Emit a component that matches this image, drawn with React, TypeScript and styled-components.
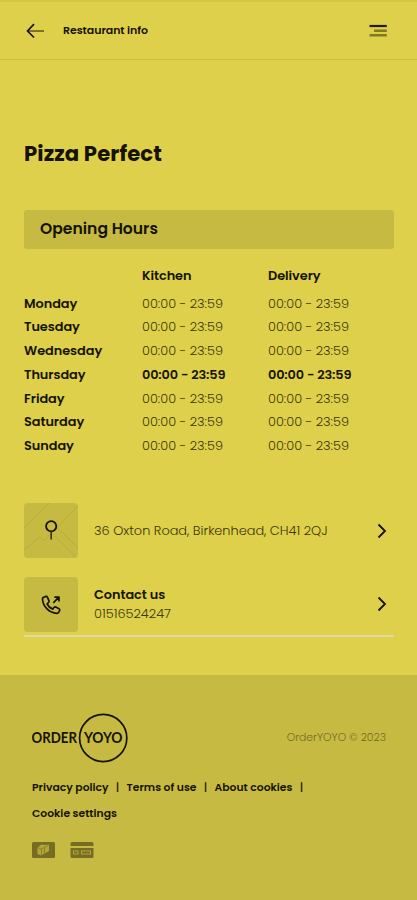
import React from "react";
import styled, { createGlobalStyle } from "styled-components";

const GlobalStyle = createGlobalStyle`
  * { box-sizing: border-box; }
  body {
    margin: 0;
    background: #ded04b;
    color: #151300;
    font-family: Poppins, Inter, sans-serif;
  }
`;

const Page = styled.div`
  height: 900px;
  display: flex;
  flex-direction: column;
  overflow: hidden;
`;

const Header = styled.header`
  height: 60px;
  flex: none;
  display: flex;
  align-items: center;
  padding: 0 30px 0 26px;
  border-top: 2px solid #d3c642;
  border-bottom: 1px solid #cbbe40;
  svg { flex: none; }
`;

const HeaderTitle = styled.span`
  flex: 1;
  margin-left: 19px;
  font-size: 11px;
  font-weight: 600;
  line-height: 16px;
  letter-spacing: -0.07px;
  padding-bottom: 2px;
`;

const Main = styled.main`
  flex: none;
  height: 615px;
  padding: 78px 23px 0 24px;
`;

const Title = styled.h1`
  margin: 0;
  font-size: 21.2px;
  font-weight: 700;
  line-height: 32px;
  letter-spacing: 0.08px;
`;

const SectionTitle = styled.h2`
  margin: 40px 0 0;
  height: 39px;
  padding-left: 16px;
  border-radius: 3px;
  background: #c6ba42;
  font-size: 15.6px;
  font-weight: 600;
  line-height: 38px;
`;

const Hours = styled.div`
  display: grid;
  grid-template-columns: 118px 126px 1fr;
  grid-template-rows: 27.4px;
  grid-auto-rows: 23.7px;
  margin-top: 14.4px;
  font-size: 12.9px;
  line-height: 26px;
`;

const Label = styled.span`
  font-weight: 600;
  letter-spacing: -0.06px;
`;

const Time = styled.span<{ $today: boolean }>`
  font-weight: ${(p) => (p.$today ? 600 : 300)};
  letter-spacing: ${(p) => (p.$today ? -0.14 : -0.02)}px;
  color: ${(p) => (p.$today ? "#151300" : "#3a3408")};
`;

const Contacts = styled.div`
  margin-top: 46.7px;
  padding-bottom: 3.6px;
  border-bottom: 2px solid #dfdba6;
`;

const ContactRow = styled.div`
  display: flex;
  align-items: center;
  height: 55px;
  padding-right: 7px;
  & + & { margin-top: 18.5px; }
`;

const Tile = styled.div`
  width: 54px;
  height: 55px;
  flex: none;
  border-radius: 4px;
  background: #c6ba42;
  overflow: hidden;
  svg { display: block; }
`;

const ContactText = styled.div`
  flex: 1;
  display: flex;
  flex-direction: column;
  margin-left: 16px;
  font-size: 12.9px;
  line-height: 19px;
`;

const Detail = styled.span`
  font-weight: 300;
  color: #3a3408;
`;

const Footer = styled.footer`
  flex: 1;
  background: #c6ba42;
  padding: 38px 31px 0 32px;
`;

const Brand = styled.div`
  display: flex;
  justify-content: space-between;
  align-items: center;
  height: 50px;
`;

const Copyright = styled.span`
  font-size: 10.8px;
  font-weight: 300;
  color: #736a23;
  line-height: 16px;
`;

const Links = styled.nav`
  display: flex;
  flex-wrap: wrap;
  margin-top: 12px;
  font-size: 10.8px;
  font-weight: 600;
  line-height: 26px;
`;

const FooterLink = styled.a`
  color: inherit;
`;

const Separator = styled.span`
  width: 18px;
  text-align: center;
  font-weight: 500;
`;

const Payments = styled.div`
  display: flex;
  gap: 15px;
  margin-top: 15px;
`;

const days = ["Monday", "Tuesday", "Wednesday", "Thursday", "Friday", "Saturday", "Sunday"];
const today = "Thursday";

const BackIcon = () => (
  <svg width="18" height="16" viewBox="0 0 18 16" fill="none">
    <path d="M2 8H18" stroke="#5a5318" strokeWidth="1.5" />
    <path d="M8 1.2L1.5 8L8 14.5" stroke="#151300" strokeWidth="1.7" />
  </svg>
);

const MenuIcon = () => (
  <svg width="18" height="14" viewBox="0 0 18 14">
    <path d="M.5 2H17.8" stroke="#201c00" strokeWidth="2.2" />
    <path d="M5 6.7H17.8M.5 11.2H17.8" stroke="#83791f" strokeWidth="2.4" />
  </svg>
);

const MapPin = () => (
  <svg width="54" height="55" viewBox="0 0 54 55" fill="none">
    <path d="M0 25L25 0M0 47L16 34L20 38L54 3M30 21L54 45M31 33L53 55" stroke="#b8ad3c" strokeWidth="1" />
    <circle cx="27.2" cy="23.3" r="5.1" stroke="#151300" strokeWidth="1.8" />
    <path d="M27.2 28.5V36.5" stroke="#393307" strokeWidth="1.6" />
  </svg>
);

const PhoneIcon = () => (
  <svg width="54" height="55" viewBox="0 0 54 55" fill="none" stroke="#151300" strokeWidth="1.7" strokeLinecap="round" strokeLinejoin="round">
    <path d="M19.2 20.6L21.7 19.4C22.4 19.1 23.1 19.5 23.4 20.1L25 23.9C25.3 24.6 25 25.2 24.4 25.7L23.1 26.8C24.2 29.2 26.1 31.1 28.7 32.1L30 30.5C30.5 30 31.1 29.8 31.8 30.1L35 31.7C35.8 32.1 36 32.7 35.7 33.4L34.8 35.2C34.4 36 33.7 36.3 32.8 36.3C25.2 35.9 19 29.7 18.5 22C18.5 21.4 18.7 20.9 19.2 20.6Z" />
    <path d="M29.8 25.3L34.6 20.3M31 20.1H35V23.8" />
  </svg>
);

const Chevron = () => (
  <svg width="10" height="16" viewBox="0 0 10 16" fill="none">
    <path d="M1.5 1.5L8 8L1.5 14.5" stroke="#151300" strokeWidth="1.8" />
  </svg>
);

const Logo = () => (
  <svg width="97" height="50" viewBox="0 0 97 50">
    <circle cx="71.2" cy="25" r="23.6" fill="none" stroke="#151300" strokeWidth="1.7" />
    <g fill="#151300" fontFamily="Lato" fontWeight="700" fontSize="15.3">
      <text x="-.5" y="30.4" textLength="45.5" lengthAdjust="spacingAndGlyphs">ORDER</text>
      <text x="52" y="30.4" textLength="38.5" lengthAdjust="spacingAndGlyphs">YOYO</text>
    </g>
  </svg>
);

const CashIcon = () => (
  <svg width="23" height="16" viewBox="0 0 23 16">
    <rect width="23" height="16" rx="1.5" fill="#766c22" />
    <path d="M5.5 5.5L9.5 2.5L13 3L17 2.5V9L13.5 11L9 13.5L5.5 12Z" fill="#b2a63b" />
    <path d="M6 5.8L9.5 7L16.5 3.2M9.5 7V13M12.5 5.5V11" stroke="#8b8029" fill="none" />
  </svg>
);

const CardIcon = () => (
  <svg width="24" height="16" viewBox="0 0 24 16">
    <path d="M2 0H22Q23.5 0 23.5 1.5V4H.5V1.5Q.5 0 2 0ZM.5 6H23.5V14.5Q23.5 16 22 16H2Q.5 16 .5 14.5Z" fill="#766c22" />
    <path d="M3.5 9H8V12H3.5ZM11.5 9H20.5V12H11.5Z" fill="none" stroke="#b2a63b" strokeWidth="1.1" />
  </svg>
);

export default function App() {
  return (
    <Page>
      <GlobalStyle />
      <Header>
        <BackIcon />
        <HeaderTitle>Restaurant info</HeaderTitle>
        <MenuIcon />
      </Header>
      <Main>
        <Title>Pizza Perfect</Title>
        <SectionTitle>Opening Hours</SectionTitle>
        <Hours>
          <span />
          <Label>Kitchen</Label>
          <Label>Delivery</Label>
          {days.map((day) => (
            <React.Fragment key={day}>
              <Label>{day}</Label>
              <Time $today={day === today}>00:00 - 23:59</Time>
              <Time $today={day === today}>00:00 - 23:59</Time>
            </React.Fragment>
          ))}
        </Hours>
        <Contacts>
          <ContactRow>
            <Tile><MapPin /></Tile>
            <ContactText>
              <Detail>36 Oxton Road, Birkenhead, CH41 2QJ</Detail>
            </ContactText>
            <Chevron />
          </ContactRow>
          <ContactRow>
            <Tile><PhoneIcon /></Tile>
            <ContactText>
              <Label>Contact us</Label>
              <Detail>01516524247</Detail>
            </ContactText>
            <Chevron />
          </ContactRow>
        </Contacts>
      </Main>
      <Footer>
        <Brand>
          <Logo />
          <Copyright>OrderYOYO © 2023</Copyright>
        </Brand>
        <Links>
          <FooterLink>Privacy policy</FooterLink>
          <Separator>|</Separator>
          <FooterLink>Terms of use</FooterLink>
          <Separator>|</Separator>
          <FooterLink>About cookies</FooterLink>
          <Separator>|</Separator>
          <FooterLink>Cookie settings</FooterLink>
        </Links>
        <Payments>
          <CashIcon />
          <CardIcon />
        </Payments>
      </Footer>
    </Page>
  );
}
